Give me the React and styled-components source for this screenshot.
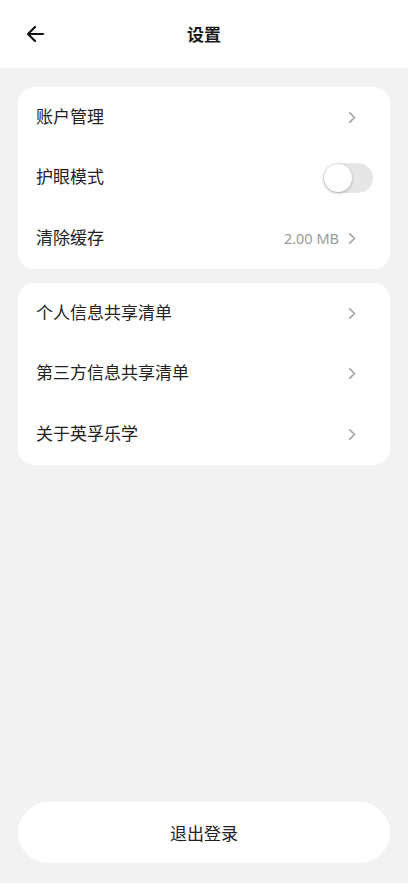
import React, { useState } from "react";
import styled, { createGlobalStyle } from "styled-components";

const GlobalStyle = createGlobalStyle`
  html, body {
    margin: 0;
    padding: 0;
    background: #f2f2f2;
    font-family: "Noto Sans", "Noto Sans CJK SC", sans-serif;
  }
  * { box-sizing: border-box; }
`;

const Page = styled.div`
  min-height: 100vh;
  display: flex;
  flex-direction: column;
  background: #f2f2f2;
`;

const Header = styled.header`
  height: 68px;
  background: #fff;
  display: flex;
  align-items: center;
  justify-content: center;
  position: relative;
`;

const BackButton = styled.button`
  position: absolute;
  left: 22px;
  top: 21px;
  width: 26px;
  height: 26px;
  padding: 0;
  border: none;
  background: none;
  display: flex;
  align-items: center;
  justify-content: center;
`;

const Title = styled.h1`
  margin: 0;
  font-size: 17px;
  font-weight: 700;
  color: #1a1a1a;
  line-height: 1;
`;

const Body = styled.main`
  flex: 1;
  display: flex;
  flex-direction: column;
  gap: 14px;
  padding: 19px 18px 0;
`;

const Card = styled.section`
  background: #fff;
  border-radius: 16px;
  display: flex;
  flex-direction: column;
  padding-bottom: 0.5px;
`;

const Row = styled.div`
  height: 60.5px;
  display: flex;
  align-items: center;
  padding: 0 38px 0 18px;
  gap: 9px;
`;

const Label = styled.span`
  flex: 1;
  font-size: 17px;
  line-height: 1;
  color: #222;
  margin-top: -2px;
`;

const Value = styled.span`
  font-size: 14.5px;
  color: #9a9a9a;
`;

const Track = styled.button`
  width: 50px;
  height: 30px;
  margin-right: -21px;
  border: none;
  border-radius: 15px;
  padding: 0;
  background: ${(p) => (p.$on ? "#4cd964" : "#e6e6e6")};
  position: relative;
`;

const Knob = styled.span`
  position: absolute;
  top: 1px;
  left: ${(p) => (p.$on ? "21px" : "1px")};
  width: 28px;
  height: 28px;
  border-radius: 50%;
  background: #fff;
  box-shadow: 0 1px 3px rgba(0, 0, 0, 0.28);
`;

const Footer = styled.div`
  padding: 0 18px 20px;
`;

const LogoutButton = styled.button`
  width: 100%;
  height: 61px;
  border: none;
  border-radius: 31px;
  background: #fff;
  font-family: inherit;
  font-size: 17px;
  color: #222;
`;

const Chevron = () => (
  <svg width="8" height="13" viewBox="0 0 8 13" style={{ marginRight: "-4px" }}>
    <path d="M1.8 1.8 L6.5 6.5 L1.8 11.2" fill="none" stroke="#a6a6a6" strokeWidth="1.7" strokeLinecap="round" strokeLinejoin="round" />
  </svg>
);

const BackArrow = () => (
  <svg width="20" height="18" viewBox="0 0 20 18">
    <path d="M18 9 H3 M10 2 L3 9 L10 16" fill="none" stroke="#111" strokeWidth="2.2" strokeLinecap="round" strokeLinejoin="round" />
  </svg>
);

export default function App() {
  const [eyeMode, setEyeMode] = useState(false);

  return (
    <Page>
      <GlobalStyle />
      <Header>
        <BackButton aria-label="返回">
          <BackArrow />
        </BackButton>
        <Title>设置</Title>
      </Header>
      <Body>
        <Card>
          <Row>
            <Label>账户管理</Label>
            <Chevron />
          </Row>
          <Row>
            <Label>护眼模式</Label>
            <Track $on={eyeMode} onClick={() => setEyeMode(!eyeMode)}>
              <Knob $on={eyeMode} />
            </Track>
          </Row>
          <Row>
            <Label>清除缓存</Label>
            <Value>2.00 MB</Value>
            <Chevron />
          </Row>
        </Card>
        <Card>
          <Row>
            <Label>个人信息共享清单</Label>
            <Chevron />
          </Row>
          <Row>
            <Label>第三方信息共享清单</Label>
            <Chevron />
          </Row>
          <Row>
            <Label>关于英孚乐学</Label>
            <Chevron />
          </Row>
        </Card>
      </Body>
      <Footer>
        <LogoutButton>退出登录</LogoutButton>
      </Footer>
    </Page>
  );
}
